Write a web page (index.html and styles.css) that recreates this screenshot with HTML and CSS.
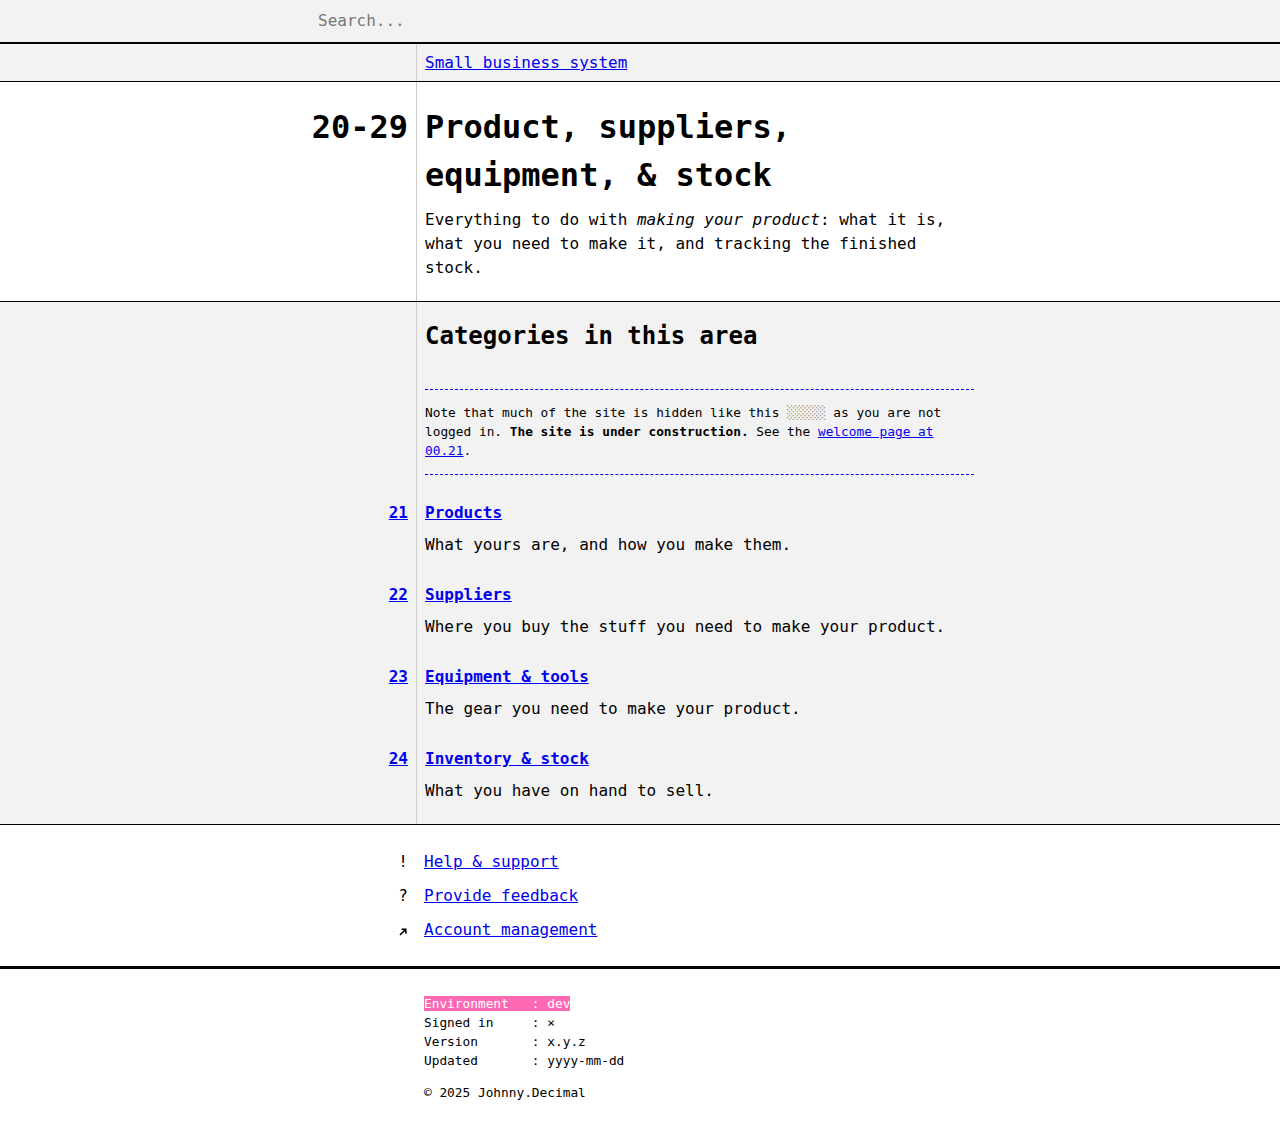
FILE: index.html
```html
<!DOCTYPE html>
<html lang="en">
<head>
<meta charset="utf-8">
<title>20-29 Product, suppliers, equipment, &amp; stock</title>
<link rel="stylesheet" href="styles.css">
</head>
<body>
<header class="search-bar">
  <input class="search-input" type="text" placeholder="Search...">
</header>

<nav class="row crumbs">
  <div class="gutter"></div>
  <div class="main"><a href="#">Small business system</a></div>
</nav>

<section class="row area">
  <div class="gutter"><span class="area-id">20-29</span></div>
  <div class="main">
    <h1 class="area-title">Product, suppliers, equipment, &amp; stock</h1>
    <p class="area-desc">Everything to do with <em>making your product</em>: what it is, what you need to make it, and tracking the finished stock.</p>
  </div>
</section>

<section class="cats grey">
  <div class="row">
    <div class="gutter"></div>
    <div class="main">
      <h2 class="cats-title">Categories in this area</h2>
      <div class="note">Note that much of the site is hidden like this <span class="hidden-block">░░░░░</span> as you are not logged in. <strong>The site is under construction.</strong> See the <a href="#">welcome page at 00.21</a>.</div>
    </div>
  </div>
  <div class="cat-list">
    <div class="row cat">
      <div class="gutter"><a class="cat-num" href="#">21</a></div>
      <div class="main"><a class="cat-name" href="#">Products</a><p class="cat-desc">What yours are, and how you make them.</p></div>
    </div>
    <div class="row cat">
      <div class="gutter"><a class="cat-num" href="#">22</a></div>
      <div class="main"><a class="cat-name" href="#">Suppliers</a><p class="cat-desc">Where you buy the stuff you need to make your product.</p></div>
    </div>
    <div class="row cat">
      <div class="gutter"><a class="cat-num" href="#">23</a></div>
      <div class="main"><a class="cat-name" href="#">Equipment &amp; tools</a><p class="cat-desc">The gear you need to make your product.</p></div>
    </div>
    <div class="row cat">
      <div class="gutter"><a class="cat-num" href="#">24</a></div>
      <div class="main"><a class="cat-name" href="#">Inventory &amp; stock</a><p class="cat-desc">What you have on hand to sell.</p></div>
    </div>
  </div>
</section>

<section class="links">
  <ul class="link-list">
    <li class="link-item"><span class="link-icon">!</span><a href="#">Help &amp; support</a></li>
    <li class="link-item"><span class="link-icon">?</span><a href="#">Provide feedback</a></li>
    <li class="link-item"><span class="link-icon"><svg class="arrow-icon" width="8" height="8" viewBox="0 0 8 8" aria-hidden="true"><path d="M1 7 L6.6 1.4 M2.6 1.2 H6.8 V5.4" fill="none" stroke="#000" stroke-width="1.6"/></svg></span><a href="#">Account management</a></li>
  </ul>
</section>

<footer class="meta">
  <div class="meta-table"><span class="env">Environment   : dev</span>
Signed in     : ×
Version       : x.y.z
Updated       : yyyy-mm-dd</div>
  <p class="copyright">© 2025 Johnny.Decimal</p>
</footer>
</body>
</html>
```
FILE: styles.css
```css
* { box-sizing: border-box; }

html, body {
  margin: 0;
  padding: 0;
  background: #fff;
  color: #000;
  font-family: "DejaVu Sans Mono", "Liberation Mono", monospace;
  font-size: 16px;
  line-height: 24px;
}

a { color: #0000ee; text-decoration: underline; }

.grey { background: linear-gradient(#cccccc, #cccccc) no-repeat 416px 0 / 1px 100%, #f2f2f2; }

/* search bar */
.search-bar {
  height: 44px;
  background: #f2f2f2;
  border-bottom: 2px solid #000;
  display: flex;
  align-items: center;
  padding-left: 318px;
}
.search-input {
  border: none;
  background: transparent;
  font: inherit;
  font-size: 16px;
  color: #000;
  padding: 0;
  width: 400px;
  outline: none;
}
.search-input::placeholder { color: #777; }

/* two column rows */
.row {
  display: grid;
  grid-template-columns: 416px minmax(0, 1fr);
}
.gutter {
  text-align: right;
  padding-right: 8px;
}
.main {
  padding-left: 9px;
  max-width: 558px;
}

.crumbs {
  padding: 7px 0 6px;
  border-bottom: 1px solid #000;
  background: linear-gradient(#cccccc, #cccccc) no-repeat 416px 0 / 1px 100%, #f2f2f2;
}

/* area */
.area {
  background: linear-gradient(#cccccc, #cccccc) no-repeat 416px 0 / 1px 100%, #fff;
  padding: 21px 0 21px;
  border-bottom: 1px solid #000;
}
.area-id {
  font-size: 32px;
  line-height: 48px;
  font-weight: bold;
}
.area-title {
  margin: 0 0 9px;
  font-size: 32px;
  line-height: 48px;
  font-weight: bold;
}
.area-desc { margin: 0; }

/* categories */
.cats {
  padding: 16px 0 21.6px;
  border-bottom: 1px solid #000;
}
.cats-title {
  margin: 0;
  font-size: 24px;
  line-height: 36px;
  font-weight: bold;
}
.note {
  margin-top: 35px;
  border-top: 1px dashed #0000ee;
  border-bottom: 1px dashed #0000ee;
  padding: 13px 0;
  font-size: 12.8px;
  line-height: 19.2px;
}
.hidden-block { color: #8a8a8a; }

.cat-list {
  margin-top: 26px;
  display: flex;
  flex-direction: column;
  gap: 26px;
}
.cat-num, .cat-name { font-weight: bold; }
.cat-desc { margin: 8px 0 0; }

/* footer links */
.links {
  padding: 25px 0 24px;
  border-bottom: 3px solid #000;
}
.link-list {
  list-style: none;
  margin: 0;
  padding: 0;
  display: flex;
  flex-direction: column;
  gap: 10px;
}
.link-item {
  display: grid;
  grid-template-columns: 408px 1fr;
  column-gap: 16px;
}
.link-icon { text-align: right; }
.arrow-icon { display: inline-block; vertical-align: -1px; margin-right: 1px; }

/* meta */
.meta {
  padding: 25px 0 35px 424px;
  font-size: 12.8px;
  line-height: 19px;
}
.meta-table { white-space: pre; }
.env { background: #ff69b4; color: #fff; }
.copyright { margin: 13px 0 0; }
```
